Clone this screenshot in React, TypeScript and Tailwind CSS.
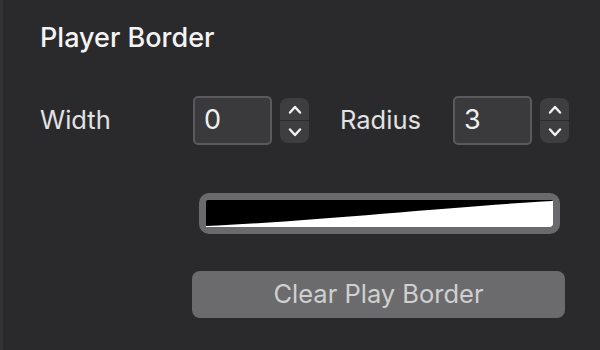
function Stepper() {
  return (
    <div className="flex h-[45px] w-[29px] flex-col overflow-hidden rounded-[8px] bg-[#3e3e40]">
      <div className="flex flex-1 items-center justify-center border-b border-[#2c2c2e]">
        <svg width="14" height="9" viewBox="0 0 14 9" fill="none">
          <path d="M2 7.5 L7 2 L12 7.5" stroke="#f2f2f2" strokeWidth="2.4" strokeLinecap="round" strokeLinejoin="round" />
        </svg>
      </div>
      <div className="flex flex-1 items-center justify-center">
        <svg width="14" height="9" viewBox="0 0 14 9" fill="none">
          <path d="M2 1.5 L7 7 L12 1.5" stroke="#f2f2f2" strokeWidth="2.4" strokeLinecap="round" strokeLinejoin="round" />
        </svg>
      </div>
    </div>
  );
}

function NumberField({ value }: { value: string }) {
  return (
    <div className="flex items-center gap-[8px]">
      <div className="flex h-[49px] w-[79px] items-center rounded-[5px] border-2 border-[#5a5a5c] bg-[#3a3a3c] pl-[9px] text-[27px] text-[#f0f0f0]">
        {value}
      </div>
      <Stepper />
    </div>
  );
}

export default function App() {
  return (
    <div
      className="h-[350px] w-[600px] border-l-[3px] border-[#323234] bg-[#2a2a2c] pl-[37px] pt-[21px]"
      style={{ fontFamily: "Inter, 'Noto Sans', sans-serif" }}
    >
      <h2 className="text-[27px] font-medium leading-[34px] text-[#f4f4f4]">Player Border</h2>

      <div className="mt-[41px] flex items-center">
        <span className="w-[153px] text-[25.5px] text-[#e2e2e2]">Width</span>
        <NumberField value="0" />
        <span className="ml-[31px] w-[113px] text-[25.5px] text-[#e2e2e2]">Radius</span>
        <NumberField value="3" />
      </div>

      <div className="ml-[159px] mt-[48px] h-[41px] w-[361px] rounded-[10px] bg-[#6a6a6c] p-[7px]">
        <svg className="block h-full w-full" viewBox="0 0 347 27" preserveAspectRatio="none">
          <rect x="0" y="0" width="347" height="27" rx="2" fill="#000" />
          <path d="M0 27 L0 26 C100 22 250 6 347 1 L347 24 Q347 27 344 27 Z" fill="#fff" />
        </svg>
      </div>

      <button className="ml-[152px] mt-[37px] flex h-[47px] w-[373px] items-center justify-center rounded-[8px] bg-[#6b6b6d] text-[25.5px] text-[#d0d0d0]">
        Clear Play Border
      </button>
    </div>
  );
}
